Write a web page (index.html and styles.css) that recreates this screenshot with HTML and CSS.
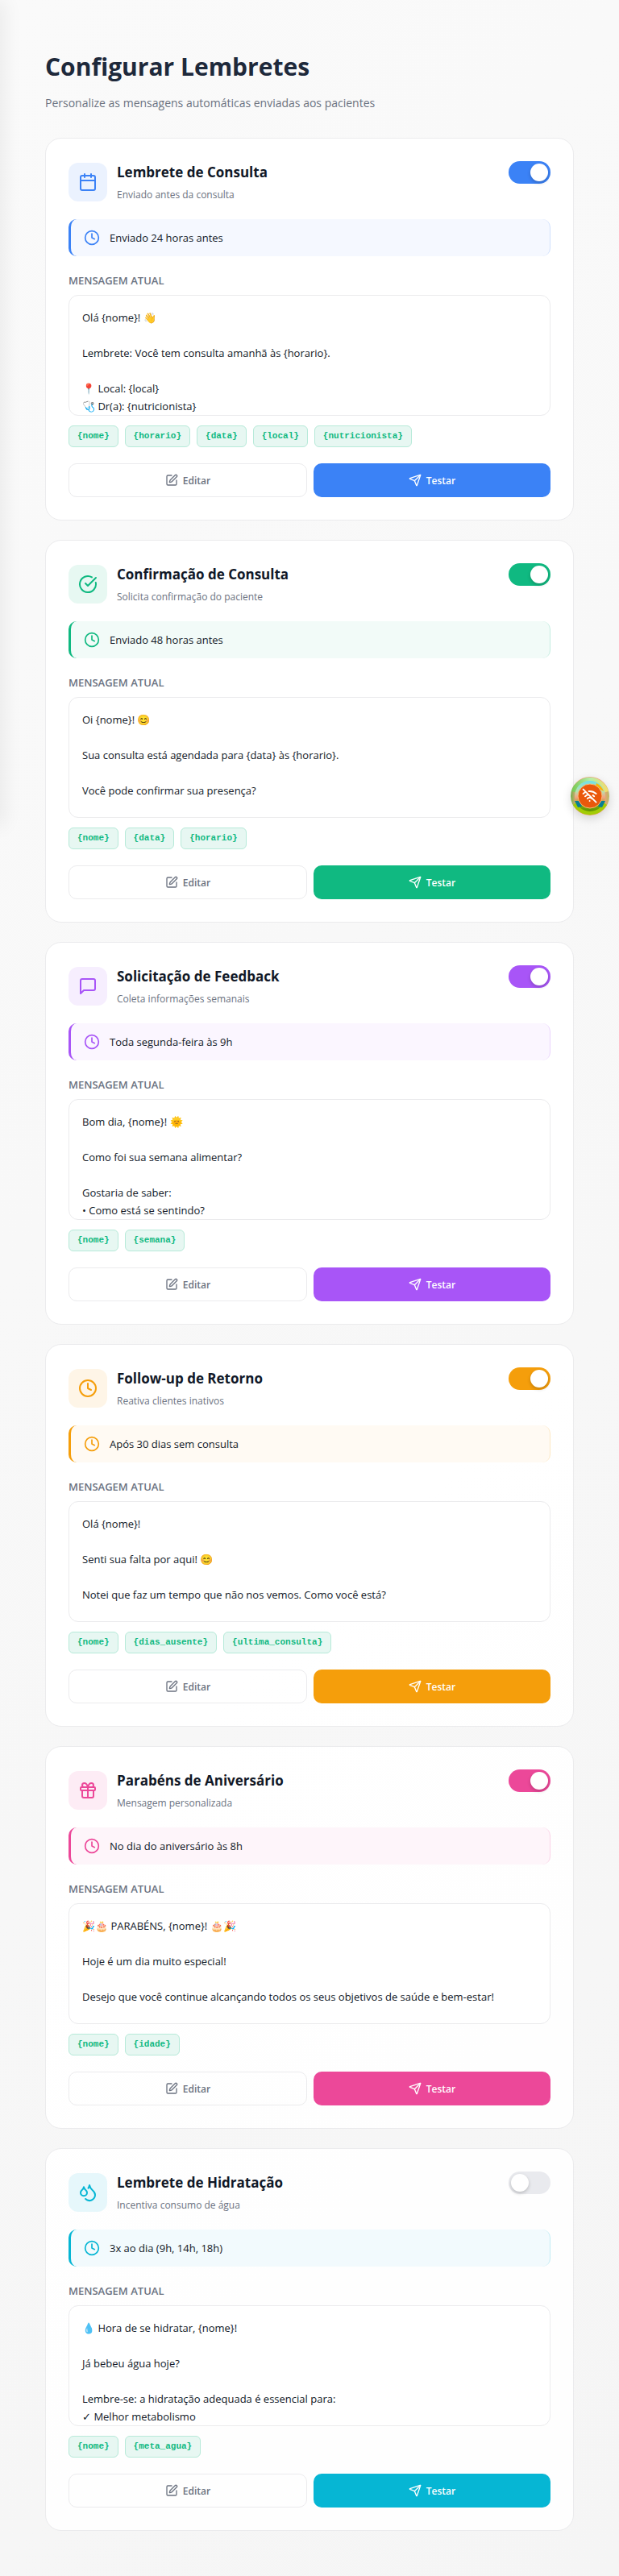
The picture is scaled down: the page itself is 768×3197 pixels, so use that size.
FILE: index.html
```html
<!DOCTYPE html>
<html lang="pt-BR">
<head>
<meta charset="utf-8">
<meta name="viewport" content="width=device-width, initial-scale=1">
<title>Configurar Lembretes</title>
<link rel="stylesheet" href="styles.css">
</head>
<body>
<svg class="sprite" aria-hidden="true">
  <symbol id="calendar" viewBox="0 0 24 24"><path d="M8 2v4M16 2v4M3 10h18"/><rect x="3" y="4" width="18" height="18" rx="2"/></symbol>
  <symbol id="clock" viewBox="0 0 24 24"><circle cx="12" cy="12" r="10"/><path d="M12 6v6l4 2"/></symbol>
  <symbol id="check" viewBox="0 0 24 24"><path d="M21.801 10A10 10 0 1 1 17 3.335"/><path d="m9 11 3 3L22 4"/></symbol>
  <symbol id="message" viewBox="0 0 24 24"><path d="M21 15a2 2 0 0 1-2 2H7l-4 4V5a2 2 0 0 1 2-2h14a2 2 0 0 1 2 2z"/></symbol>
  <symbol id="gift" viewBox="0 0 24 24"><rect x="3" y="8" width="18" height="4" rx="1"/><path d="M12 8v13M19 12v7a2 2 0 0 1-2 2H7a2 2 0 0 1-2-2v-7"/><path d="M7.5 8a2.5 2.5 0 0 1 0-5A4.8 8 0 0 1 12 8a4.8 8 0 0 1 4.5-5 2.5 2.5 0 0 1 0 5"/></symbol>
  <symbol id="droplets" viewBox="0 0 24 24"><path d="M7 16.3c2.2 0 4-1.83 4-4.05 0-1.16-.57-2.26-1.71-3.19S7.29 6.75 7 5.3c-.29 1.45-1.14 2.84-2.29 3.76S3 11.1 3 12.25c0 2.22 1.8 4.05 4 4.05z"/><path d="M12.56 6.6A10.97 10.97 0 0 0 14 3.02c.5 2.5 2 4.9 4 6.5s3 3.5 3 5.5a6.98 6.98 0 0 1-11.91 4.97"/></symbol>
  <symbol id="edit" viewBox="0 0 24 24"><path d="M12 3H5a2 2 0 0 0-2 2v14a2 2 0 0 0 2 2h14a2 2 0 0 0 2-2v-7"/><path d="M18.375 2.625a1 1 0 0 1 3 3l-9.013 9.014a2 2 0 0 1-.853.505l-2.873.84a.5.5 0 0 1-.62-.62l.84-2.873a2 2 0 0 1 .506-.852z"/></symbol>
  <symbol id="send" viewBox="0 0 24 24"><path d="M14.536 21.686a.5.5 0 0 0 .937-.024l6.5-19a.496.496 0 0 0-.635-.635l-19 6.5a.5.5 0 0 0-.024.937l7.93 3.18a2 2 0 0 1 1.112 1.11z"/><path d="m21.854 2.147-10.94 10.939"/></symbol>
</svg>

<aside class="drawer" aria-hidden="true"></aside>

<main class="page">
  <header class="page-header">
    <h1>Configurar Lembretes</h1>
    <p>Personalize as mensagens automáticas enviadas aos pacientes</p>
  </header>

  <section class="card blue">
    <div class="card-header">
      <div class="card-info">
        <span class="badge"><svg class="icon large"><use href="#calendar"/></svg></span>
        <div><h2 id="t1">Lembrete de Consulta</h2><p>Enviado antes da consulta</p></div>
      </div>
      <input class="toggle" type="checkbox" role="switch" aria-labelledby="t1" checked>
    </div>
    <div class="schedule"><svg class="icon medium"><use href="#clock"/></svg><span>Enviado 24 horas antes</span></div>
    <h3>MENSAGEM ATUAL</h3>
    <div class="message">Olá {nome}! 👋

Lembrete: Você tem consulta amanhã às {horario}.

📍 Local: {local}
🩺 Dr(a): {nutricionista}</div>
    <div class="chips"><code>{nome}</code><code>{horario}</code><code>{data}</code><code>{local}</code><code>{nutricionista}</code></div>
    <div class="actions">
      <button class="btn edit" type="button"><svg class="icon"><use href="#edit"/></svg>Editar</button>
      <button class="btn test" type="button"><svg class="icon"><use href="#send"/></svg>Testar</button>
    </div>
  </section>

  <section class="card green">
    <div class="card-header">
      <div class="card-info">
        <span class="badge"><svg class="icon large"><use href="#check"/></svg></span>
        <div><h2 id="t2">Confirmação de Consulta</h2><p>Solicita confirmação do paciente</p></div>
      </div>
      <input class="toggle" type="checkbox" role="switch" aria-labelledby="t2" checked>
    </div>
    <div class="schedule"><svg class="icon medium"><use href="#clock"/></svg><span>Enviado 48 horas antes</span></div>
    <h3>MENSAGEM ATUAL</h3>
    <div class="message">Oi {nome}! 😊

Sua consulta está agendada para {data} às {horario}.

Você pode confirmar sua presença?</div>
    <div class="chips"><code>{nome}</code><code>{data}</code><code>{horario}</code></div>
    <div class="actions">
      <button class="btn edit" type="button"><svg class="icon"><use href="#edit"/></svg>Editar</button>
      <button class="btn test" type="button"><svg class="icon"><use href="#send"/></svg>Testar</button>
    </div>
  </section>

  <section class="card purple">
    <div class="card-header">
      <div class="card-info">
        <span class="badge"><svg class="icon large"><use href="#message"/></svg></span>
        <div><h2 id="t3">Solicitação de Feedback</h2><p>Coleta informações semanais</p></div>
      </div>
      <input class="toggle" type="checkbox" role="switch" aria-labelledby="t3" checked>
    </div>
    <div class="schedule"><svg class="icon medium"><use href="#clock"/></svg><span>Toda segunda-feira às 9h</span></div>
    <h3>MENSAGEM ATUAL</h3>
    <div class="message">Bom dia, {nome}! 🌞

Como foi sua semana alimentar?

Gostaria de saber:
• Como está se sentindo?</div>
    <div class="chips"><code>{nome}</code><code>{semana}</code></div>
    <div class="actions">
      <button class="btn edit" type="button"><svg class="icon"><use href="#edit"/></svg>Editar</button>
      <button class="btn test" type="button"><svg class="icon"><use href="#send"/></svg>Testar</button>
    </div>
  </section>

  <section class="card amber">
    <div class="card-header">
      <div class="card-info">
        <span class="badge"><svg class="icon large"><use href="#clock"/></svg></span>
        <div><h2 id="t4">Follow-up de Retorno</h2><p>Reativa clientes inativos</p></div>
      </div>
      <input class="toggle" type="checkbox" role="switch" aria-labelledby="t4" checked>
    </div>
    <div class="schedule"><svg class="icon medium"><use href="#clock"/></svg><span>Após 30 dias sem consulta</span></div>
    <h3>MENSAGEM ATUAL</h3>
    <div class="message">Olá {nome}!

Senti sua falta por aqui! 😊

Notei que faz um tempo que não nos vemos. Como você está?</div>
    <div class="chips"><code>{nome}</code><code>{dias_ausente}</code><code>{ultima_consulta}</code></div>
    <div class="actions">
      <button class="btn edit" type="button"><svg class="icon"><use href="#edit"/></svg>Editar</button>
      <button class="btn test" type="button"><svg class="icon"><use href="#send"/></svg>Testar</button>
    </div>
  </section>

  <section class="card pink">
    <div class="card-header">
      <div class="card-info">
        <span class="badge"><svg class="icon large"><use href="#gift"/></svg></span>
        <div><h2 id="t5">Parabéns de Aniversário</h2><p>Mensagem personalizada</p></div>
      </div>
      <input class="toggle" type="checkbox" role="switch" aria-labelledby="t5" checked>
    </div>
    <div class="schedule"><svg class="icon medium"><use href="#clock"/></svg><span>No dia do aniversário às 8h</span></div>
    <h3>MENSAGEM ATUAL</h3>
    <div class="message">🎉🎂 PARABÉNS, {nome}! 🎂🎉

Hoje é um dia muito especial!

Desejo que você continue alcançando todos os seus objetivos de saúde e bem-estar!</div>
    <div class="chips"><code>{nome}</code><code>{idade}</code></div>
    <div class="actions">
      <button class="btn edit" type="button"><svg class="icon"><use href="#edit"/></svg>Editar</button>
      <button class="btn test" type="button"><svg class="icon"><use href="#send"/></svg>Testar</button>
    </div>
  </section>

  <section class="card cyan">
    <div class="card-header">
      <div class="card-info">
        <span class="badge"><svg class="icon large"><use href="#droplets"/></svg></span>
        <div><h2 id="t6">Lembrete de Hidratação</h2><p>Incentiva consumo de água</p></div>
      </div>
      <input class="toggle" type="checkbox" role="switch" aria-labelledby="t6">
    </div>
    <div class="schedule"><svg class="icon medium"><use href="#clock"/></svg><span>3x ao dia (9h, 14h, 18h)</span></div>
    <h3>MENSAGEM ATUAL</h3>
    <div class="message">💧 Hora de se hidratar, {nome}!

Já bebeu água hoje?

Lembre-se: a hidratação adequada é essencial para:
✓ Melhor metabolismo</div>
    <div class="chips"><code>{nome}</code><code>{meta_agua}</code></div>
    <div class="actions">
      <button class="btn edit" type="button"><svg class="icon"><use href="#edit"/></svg>Editar</button>
      <button class="btn test" type="button"><svg class="icon"><use href="#send"/></svg>Testar</button>
    </div>
  </section>
</main>

<button class="offline" type="button" aria-label="Sem conexão">
  <svg viewBox="0 0 48 48" width="48" height="48">
    <defs>
      <linearGradient id="ring" x1="0" y1="0" x2="1" y2="0">
        <stop offset="0" stop-color="#6fb04a"/><stop offset=".15" stop-color="#e8a878"/><stop offset=".85" stop-color="#f2a27c"/><stop offset="1" stop-color="#b9b860"/>
      </linearGradient>
      <linearGradient id="sky" x1="0" y1="0" x2="0" y2="1">
        <stop offset="0" stop-color="#6fe0e8"/><stop offset=".35" stop-color="#b9e0b0"/><stop offset=".55" stop-color="#f5a080"/><stop offset=".8" stop-color="#7fae10"/><stop offset="1" stop-color="#5b8f00"/>
      </linearGradient>
      <linearGradient id="top" x1="0" y1="0" x2="1" y2="0">
        <stop offset="0" stop-color="#74c850"/><stop offset=".5" stop-color="#b5eda8"/><stop offset="1" stop-color="#f5dc68"/>
      </linearGradient>
    </defs>
    <circle cx="24" cy="24" r="24" fill="url(#ring)"/>
    <path d="M1 18A24 24 0 0 1 47 18L40 20A17 17 0 0 0 8 20Z" fill="url(#top)"/>
    <path d="M3 35A24 24 0 0 0 45 35L40 31A17 17 0 0 1 8 31Z" fill="#a2cc05"/>
    <circle cx="24" cy="24" r="19" fill="url(#sky)"/>
    <path d="M32 8A18 18 0 0 1 41 18L37 16A16 16 0 0 0 31 11Z" fill="#ffb300"/>
    <path d="M5 30h6l3 7-5 1zM43 30h-6l-3 7 5 1z" fill="#087f93"/>
    <circle cx="24" cy="24" r="15" fill="#ea580c" stroke="#f6bd75" stroke-width="1"/>
    <g transform="translate(14 14) scale(.8)" fill="none" stroke="#fff" stroke-width="2.4" stroke-linecap="round">
      <path d="M12 20h.01M8.5 16.4a5 5 0 0 1 7 0M5 12.9a10 10 0 0 1 5.2-2.7M19 12.9a10 10 0 0 0-2-1.5M2 8.8a15 15 0 0 1 4.2-2.6M22 8.8a15 15 0 0 0-11.3-3.8M2 2l20 20"/>
    </g>
  </svg>
</button>
</body>
</html>
```
FILE: styles.css
```css
* {
  box-sizing: border-box;
  margin: 0;
}

body {
  position: relative;
  min-height: 100vh;
  overflow-x: hidden;
  color: #111827;
  font-family: "Segoe UI", "Open Sans", sans-serif;
  background: linear-gradient(135deg, #fafafa 0%, #f5f5f5 100%);
}

.sprite {
  position: absolute;
  width: 0;
  height: 0;
}

/* Closed navigation drawer: only its shadow reaches the page */
.drawer {
  position: absolute;
  top: 0;
  left: -20px;
  width: 20px;
  height: 1024px;
  box-shadow: 4px 0 24px rgba(0, 0, 0, 0.08);
}

.page {
  display: flex;
  flex-direction: column;
  gap: 24px;
  padding: 56px;
}

.page-header {
  margin-bottom: 8px;
}

.page-header h1 {
  margin-bottom: 6px;
  color: #1e293b;
  font-size: 30px;
  font-weight: 700;
  line-height: 54px;
}

.page-header p {
  color: #6b7280;
  font-size: 14px;
  line-height: 23px;
}

.blue { --accent: #3b82f6; --tint: #ebf2fe; --wash: #f5f8ff; }
.green { --accent: #10b981; --tint: #e7f8f2; --wash: #f2fbf8; }
.purple { --accent: #a855f7; --tint: #f6eefe; --wash: #fbf6ff; }
.amber { --accent: #f59e0b; --tint: #fef5e7; --wash: #fffaf3; }
.pink { --accent: #ec4899; --tint: #fdecf5; --wash: #fef5fa; }
.cyan { --accent: #06b6d4; --tint: #e6f7fb; --wash: #f2fafd; }

.card {
  padding: 28px;
  border: 1px solid #ebebed;
  border-radius: 20px;
  background: rgba(255, 255, 255, 0.9);
}

.card-header {
  display: flex;
  align-items: flex-start;
  justify-content: space-between;
  margin-bottom: 20px;
}

.card-info {
  display: flex;
  align-items: center;
  gap: 12px;
}

.card-info h2 {
  margin-bottom: 4px;
  font-size: 17px;
  font-weight: 700;
  line-height: 28px;
}

.card-info p {
  color: #6b7280;
  font-size: 12px;
  line-height: 20px;
}

.badge {
  display: flex;
  flex: none;
  align-items: center;
  justify-content: center;
  width: 48px;
  height: 48px;
  border-radius: 12px;
  color: var(--accent);
  background: var(--tint);
}

.icon {
  flex: none;
  width: 16px;
  height: 16px;
  fill: none;
  stroke: currentColor;
  stroke-width: 2;
  stroke-linecap: round;
  stroke-linejoin: round;
}

.icon.medium {
  width: 20px;
  height: 20px;
}

.icon.large {
  width: 24px;
  height: 24px;
}

.toggle {
  appearance: none;
  flex: none;
  width: 52px;
  height: 28px;
  padding: 3px;
  border-radius: 14px;
  background: #e9eaee;
  cursor: pointer;
}

.toggle::before {
  display: block;
  width: 22px;
  height: 22px;
  border-radius: 50%;
  background: #fff;
  box-shadow: 0 2px 4px rgba(0, 0, 0, 0.2);
  content: "";
}

.toggle:checked {
  background: var(--accent);
}

.toggle:checked::before {
  margin-left: auto;
}

.schedule {
  display: flex;
  align-items: center;
  gap: 12px;
  height: 46px;
  margin-bottom: 20px;
  padding: 0 16px;
  border-right: 1px solid color-mix(in srgb, var(--accent) 20%, transparent);
  border-left: 3px solid var(--accent);
  border-radius: 10px;
  background: var(--wash);
  font-size: 13px;
  font-weight: 500;
  line-height: 20px;
}

.schedule .icon {
  color: var(--accent);
}

.card h3 {
  margin-bottom: 8px;
  color: #6b7280;
  font-size: 13px;
  font-weight: 600;
  line-height: 20px;
}

.message {
  height: 150px;
  margin-bottom: 12px;
  padding: 16px;
  overflow: hidden;
  border: 1px solid #ebebed;
  border-radius: 12px;
  background: rgba(255, 255, 255, 0.5);
  font-size: 13px;
  line-height: 22px;
  white-space: pre-wrap;
}

.chips {
  display: flex;
  flex-wrap: wrap;
  gap: 8px;
  margin-bottom: 20px;
}

.chips code {
  padding: 5px 10px;
  border: 1px solid #b7ead9;
  border-radius: 6px;
  color: #10b981;
  background: #e7f7f2;
  font-family: "Courier New", "Liberation Mono", monospace;
  font-size: 11px;
  font-weight: 600;
  line-height: 15px;
}

.actions {
  display: flex;
  gap: 8px;
}

.btn {
  display: flex;
  flex: 1;
  align-items: center;
  justify-content: center;
  gap: 6px;
  height: 42px;
  border: 0;
  border-radius: 10px;
  font: inherit;
  font-size: 12px;
  font-weight: 600;
  cursor: pointer;
}

.edit {
  border: 1px solid #ebebed;
  color: #6b7280;
  background: transparent;
}

.test {
  color: #fff;
  background: var(--accent);
}

.offline {
  position: absolute;
  top: 964px;
  right: 12px;
  width: 48px;
  height: 48px;
  padding: 0;
  border: 0;
  border-radius: 50%;
  background: none;
  box-shadow: 0 4px 12px rgba(0, 0, 0, 0.15);
  cursor: pointer;
}

.offline svg {
  display: block;
}
```
